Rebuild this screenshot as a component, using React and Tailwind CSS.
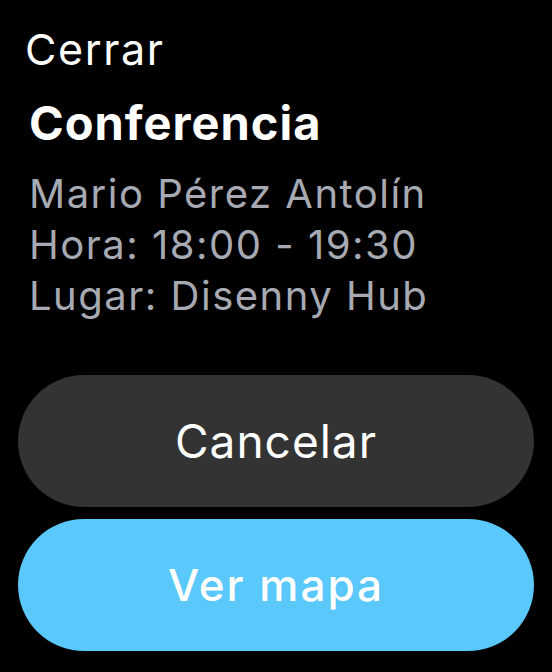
import React from 'react';

const App = () => {
  return (
    <div className="min-h-screen w-[552px] h-[672px] bg-black text-white overflow-hidden" style={{ fontFamily: 'Inter, "Noto Sans", sans-serif' }}>
      <div className="pl-[25px] pt-[24px]">
        <div className="text-[43px] leading-[50px] tracking-[1.6px]">Cerrar</div>
      </div>
      <div className="pl-[29px] pt-[21px]">
        <h1 className="text-[47px] leading-[56px] font-bold tracking-[1px]">Conferencia</h1>
        <div className="mt-[17px] text-[40px] leading-[51px] text-[#a7aab3] tracking-[1.5px]">
          <p>Mario Pérez Antolín</p>
          <p>Hora: 18:00 - 19:30</p>
          <p>Lugar: Disenny Hub</p>
        </div>
      </div>
      <div className="px-[18px] mt-[54px] flex flex-col gap-[12px]">
        <button className="h-[132px] w-full rounded-full bg-[#333333] text-white text-[46px] tracking-[1px]">
          Cancelar
        </button>
        <button className="h-[132px] w-full rounded-full bg-[#5ac8fa] text-white text-[44px] font-medium tracking-[2px]">
          Ver mapa
        </button>
      </div>
    </div>
  );
};

export default App;
